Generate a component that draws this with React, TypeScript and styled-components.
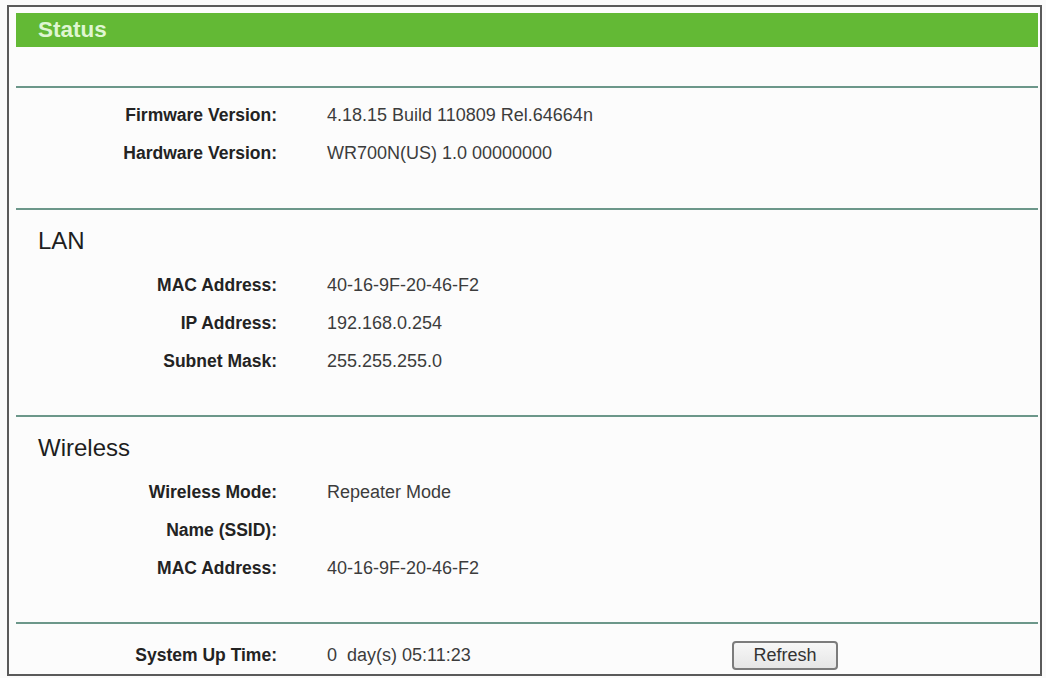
import React, { FC } from 'react';
import styled, { createGlobalStyle } from 'styled-components';

const GlobalStyle = createGlobalStyle`
  html, body {
    margin: 0;
    padding: 0;
    background: #fbfbfb;
  }
  body {
    font-family: "Liberation Sans", Arial, sans-serif;
  }
`;

const Frame = styled.div`
  box-sizing: border-box;
  margin: 5px 4px 0 7px;
  height: 671px;
  border: 2px solid #5a5a5a;
  padding: 6px 2px 0 7px;
  background: #fcfcfc;
  display: flex;
  flex-direction: column;
`;

const TitleBar = styled.div`
  height: 34px;
  background: #63b935;
  display: flex;
  align-items: center;
  padding-left: 22px;
  font-size: 22.5px;
  font-weight: bold;
  color: #dff6d2;
  margin-bottom: 39px;
`;

const Section = styled.section<{ $top: number; $bottom: number }>`
  border-top: 2px solid #6c978a;
  padding-top: ${(p) => p.$top}px;
  padding-bottom: ${(p) => p.$bottom}px;
`;

const Heading = styled.h2`
  margin: 0 0 6px;
  height: 38px;
  line-height: 38px;
  padding-left: 22px;
  font-size: 24px;
  font-weight: normal;
  color: #1e1e1e;
`;

const Row = styled.div`
  display: grid;
  grid-template-columns: 261px 455px auto;
  height: 38px;
  align-items: center;
`;

const Label = styled.div`
  text-align: right;
  font-size: 17.5px;
  font-weight: bold;
  color: #232323;
`;

const Value = styled.div`
  padding-left: 50px;
  font-size: 18px;
  color: #3c3c3c;
  white-space: pre;
`;

const Button = styled.button`
  width: 106px;
  height: 29px;
  border: 2px solid #7c7c7c;
  border-radius: 4px;
  background: linear-gradient(#f7f7f7, #e6e6e6);
  font-family: "Liberation Sans", Arial, sans-serif;
  font-size: 18px;
  color: #333;
  padding: 0;
`;

interface Field {
  label: string;
  value: string;
}

const FieldRows: FC<{ fields: Field[] }> = ({ fields }) => (
  <>
    {fields.map((f, i) => (
      <Row key={i}>
        <Label>{f.label}</Label>
        <Value>{f.value}</Value>
      </Row>
    ))}
  </>
);

const App: FC = () => (
  <>
    <GlobalStyle />
    <Frame>
      <TitleBar>Status</TitleBar>
      <Section $top={8} $bottom={36}>
        <FieldRows
          fields={[
            { label: 'Firmware Version:', value: '4.18.15 Build 110809 Rel.64664n' },
            { label: 'Hardware Version:', value: 'WR700N(US) 1.0 00000000' },
          ]}
        />
      </Section>
      <Section $top={12} $bottom={35}>
        <Heading>LAN</Heading>
        <FieldRows
          fields={[
            { label: 'MAC Address:', value: '40-16-9F-20-46-F2' },
            { label: 'IP Address:', value: '192.168.0.254' },
            { label: 'Subnet Mask:', value: '255.255.255.0' },
          ]}
        />
      </Section>
      <Section $top={12} $bottom={35}>
        <Heading>Wireless</Heading>
        <FieldRows
          fields={[
            { label: 'Wireless Mode:', value: 'Repeater Mode' },
            { label: 'Name (SSID):', value: '' },
            { label: 'MAC Address:', value: '40-16-9F-20-46-F2' },
          ]}
        />
      </Section>
      <Section $top={12} $bottom={0}>
        <Row>
          <Label>System Up Time:</Label>
          <Value>0  day(s) 05:11:23</Value>
          <div>
            <Button>Refresh</Button>
          </div>
        </Row>
      </Section>
    </Frame>
  </>
);

export default App;
